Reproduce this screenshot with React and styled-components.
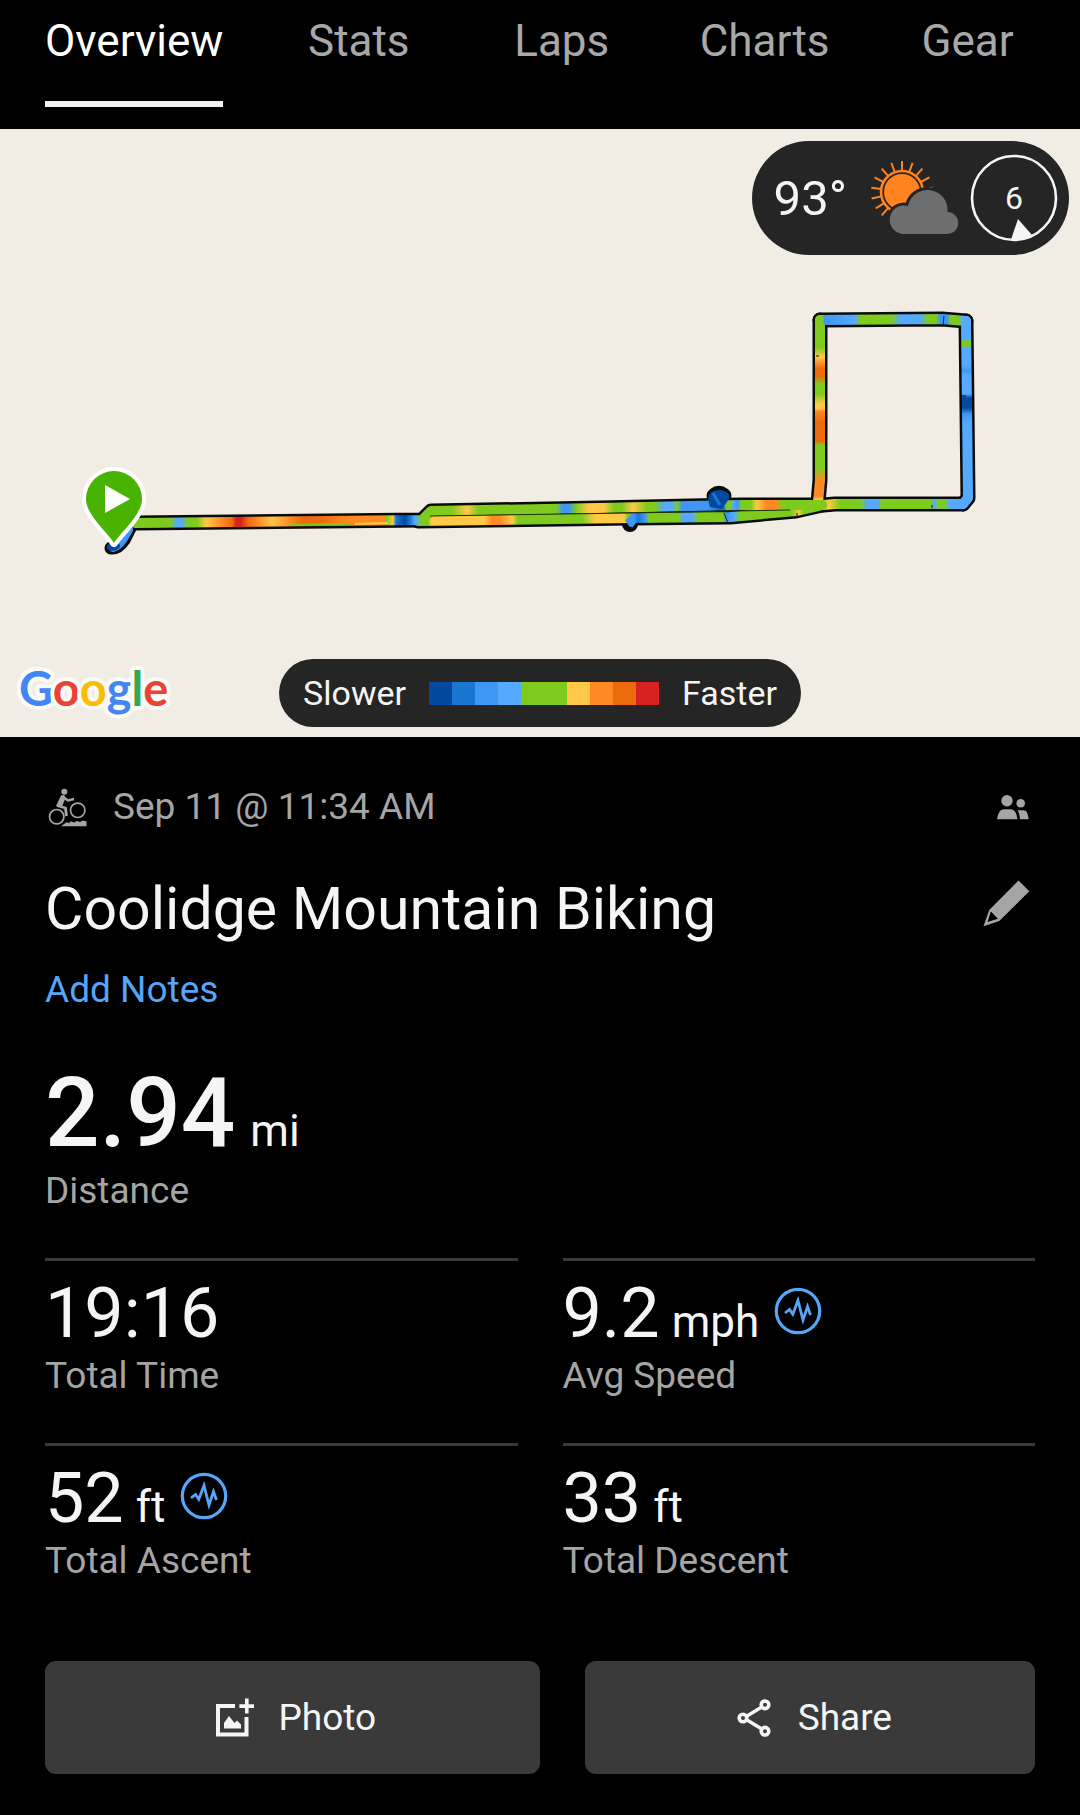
import React, { useState } from 'react'
import styled, { createGlobalStyle, css } from 'styled-components'

const GlobalStyle = createGlobalStyle`
  * {
    box-sizing: border-box;
  }

  body {
    margin: 0;
    background: #000000;
    color: #f5f5f5;
    font-family: Roboto, sans-serif;
    font-size: 37px;
    line-height: 48px;
  }

  button {
    border: 0;
    padding: 0;
    background: none;
    color: inherit;
    font: inherit;
    cursor: pointer;
  }

  svg {
    display: block;
    flex: none;
  }
`

/* ---------- tabs ---------- */

const Tabs = styled.nav`
  display: flex;
  padding: 17px 11px 22px;
`

const Tab = styled.button`
  flex: ${({ $wide }) => ($wide ? 'none' : '1')};
  display: flex;
  justify-content: center;
  padding: 0 34px;
  font-size: 44px;
  color: ${({ $active }) => ($active ? '#ffffff' : '#a8a8a8')};
`

const TabLabel = styled.span`
  padding-bottom: 36px;
  border-bottom: 6px solid ${({ $active }) => ($active ? '#f2f2f2' : 'transparent')};
`

/* ---------- map ---------- */

const Map = styled.section`
  position: relative;
  display: flex;
  flex-direction: column;
  justify-content: space-between;
  aspect-ratio: 1080 / 608;
  padding: 12px 11px 10px;
  background: #f1ede5;
`

const RouteLayer = styled.svg`
  position: absolute;
  inset: 0;
  width: 100%;
  height: 100%;
`

const pill = css`
  position: relative;
  display: flex;
  align-items: center;
  border-radius: 57px;
  background: #252525;
`

const Weather = styled.div`
  ${pill}
  align-self: flex-end;
  height: 114px;
  padding: 0 11px 0 22px;
`

const Temperature = styled.span`
  margin-right: 19px;
  padding-top: 2px;
  font-size: 49px;
`

const WindDial = styled.div`
  position: relative;
  display: grid;
  place-items: center;
  width: 88px;
  height: 88px;
  margin-left: 8px;
  font-size: 32px;
`

const DialRing = styled.svg`
  position: absolute;
  inset: 0;
`

const MapFooter = styled.div`
  position: relative;
  display: grid;
  grid-template-columns: 1fr auto 1fr;
  align-items: center;
`

const Logo = styled.svg`
  width: 170px;
  height: 68px;
`

const Legend = styled.div`
  ${pill}
  gap: 23px;
  height: 68px;
  padding: 0 24px;
  font-size: 34px;
`

const Scale = styled.div`
  display: flex;
`

const Swatch = styled.span`
  width: 23px;
  height: 23px;
  background: ${({ $color }) => $color};
`

/* ---------- summary ---------- */

const Summary = styled.main`
  padding: 46px 45px 41px;
`

const MetaRow = styled.div`
  display: flex;
  align-items: center;
  justify-content: space-between;
  padding-right: 6px;
  color: #a5a5a5;
`

const When = styled.div`
  display: flex;
  align-items: center;
  gap: 26px;
  padding-left: 3px;
`

const TitleRow = styled.div`
  display: flex;
  align-items: center;
  justify-content: space-between;
  margin-top: 42px;
  padding-right: 5px;
`

const Title = styled.h1`
  margin: 0;
  font-size: 59px;
  font-weight: 400;
  line-height: 72px;
`

const EditButton = styled.button`
  padding-bottom: 12px;
`

const NotesLink = styled.a`
  display: block;
  width: fit-content;
  margin-top: 21px;
  color: #55a5f8;
  text-decoration: none;
`

const Stats = styled.dl`
  display: grid;
  grid-template-columns: 1fr 1fr;
  gap: 43px 45px;
  margin: 45px 0 0;
`

const Stat = styled.div`
  display: flex;
  flex-direction: column-reverse;
  ${({ $hero }) =>
    $hero
      ? css`
          grid-column: 1 / -1;
        `
      : css`
          padding-top: 13px;
          border-top: 3px solid #3a3a3a;
        `}
`

const StatLabel = styled.dt`
  color: #a5a5a5;
`

const StatValue = styled.dd`
  display: flex;
  align-items: center;
  gap: 15px;
  margin: 0;
  font-size: ${({ $hero }) => ($hero ? '96px' : '70px')};
  font-weight: ${({ $hero }) => ($hero ? 500 : 400)};
  line-height: ${({ $hero }) => ($hero ? '108px' : '78px')};
`

const Unit = styled.span`
  margin-left: ${({ $hero }) => ($hero ? '15px' : '12px')};
  font-size: 44px;
  font-weight: 400;
  line-height: 1;
`

const PulseIcon = styled.svg`
  width: 48px;
  height: 48px;
  margin-bottom: 5px;
`

const Actions = styled.div`
  display: flex;
  gap: 45px;
  margin-top: 76px;
`

const ActionButton = styled.button`
  flex: ${({ $grow }) => $grow} 1 0;
  display: flex;
  align-items: center;
  justify-content: center;
  gap: 24px;
  height: 113px;
  padding-left: 6px;
  border-radius: 11px;
  background: #3a3a3a;
`

/* ---------- data ---------- */

const C = {
  navy: '#0449a0',
  blue: '#1976d2',
  azure: '#3f97f5',
  sky: '#55a9ff',
  green: '#7fcb1d',
  yellow: '#ffc947',
  orange: '#ff8a25',
  rust: '#ed6a0c',
  red: '#d82222',
}

const legendColors = [
  C.navy, C.blue, C.azure, C.sky, C.green, C.green, C.yellow, C.orange, C.rust, C.red,
]

// stops are [position along the axis, colour name]
const segments = [
  {
    id: 'loop-right',
    axis: 'y',
    d: 'M966 321 L968 498 L963 504',
    stops: [
      [326, 'sky'], [339, 'sky'], [341, 'green'], [345, 'green'], [349, 'sky'], [365, 'sky'],
      [371, 'azure'], [375, 'sky'], [394, 'sky'], [398, 'navy'], [408, 'navy'], [414, 'azure'],
      [424, 'sky'],
    ],
  },
  {
    id: 'loop-left',
    axis: 'y',
    d: 'M820 320 L820 480 L818 503',
    stops: [
      [320, 'green'], [348, 'green'], [357, 'yellow'], [364, 'orange'], [369, 'rust'],
      [376, 'rust'], [384, 'green'], [394, 'green'], [404, 'yellow'], [409, 'yellow'],
      [411, 'orange'], [422, 'rust'], [441, 'rust'], [445, 'green'], [468, 'green'],
      [481, 'orange'], [496, 'orange'], [500, 'yellow'],
    ],
  },
  {
    id: 'loop-top',
    axis: 'x',
    d: 'M820 320 L942 319 L966 321',
    stops: [
      [820, 'green'], [823, 'green'], [824, 'azure'], [855, 'sky'], [860, 'green'],
      [892, 'green'], [900, 'sky'], [920, 'sky'], [928, 'green'], [936, 'green'],
      [940, 'azure'], [948, 'azure'], [950, 'green'], [958, 'green'], [963, 'sky'],
    ],
  },
  {
    id: 'loop-bottom',
    axis: 'x',
    d: 'M812 506 L835 504 L963 504',
    stops: [
      [820, 'green'], [829, 'yellow'], [840, 'green'], [860, 'green'], [868, 'sky'], [878, 'sky'],
      [881, 'green'], [931, 'green'], [934, 'sky'], [939, 'green'], [945, 'green'], [949, 'sky'],
    ],
  },
  {
    id: 'leg-lower',
    axis: 'x',
    d: 'M418 521 L630 518 L730 517 L796 511 L818 506',
    stops: [
      [428, 'green'], [431, 'yellow'], [484, 'yellow'], [492, 'orange'], [500, 'orange'],
      [512, 'yellow'], [518, 'green'], [582, 'green'], [595, 'yellow'], [624, 'yellow'],
      [628, 'green'], [634, 'azure'], [638, 'blue'], [645, 'azure'], [649, 'green'],
      [679, 'green'], [682, 'sky'], [692, 'sky'], [698, 'green'], [723, 'green'], [727, 'azure'],
      [734, 'sky'], [740, 'green'], [792, 'green'], [799, 'yellow'], [803, 'green'],
    ],
  },
  {
    id: 'leg-upper',
    axis: 'x',
    d: 'M135 523 L422 520 L431 511 L600 508 L690 506 L740 505 L822 505',
    stops: [
      [170, 'green'], [177, 'sky'], [181, 'sky'], [188, 'green'], [197, 'green'], [206, 'yellow'],
      [222, 'orange'], [232, 'rust'], [236, 'red'], [241, 'red'], [248, 'rust'], [258, 'orange'],
      [272, 'yellow'], [290, 'orange'], [302, 'rust'], [320, 'rust'], [350, 'orange'],
      [384, 'orange'], [387, 'green'], [393, 'yellow'], [396, 'blue'], [405, 'navy'],
      [410, 'blue'], [415, 'sky'], [422, 'green'], [452, 'green'], [467, 'yellow'],
      [478, 'green'], [556, 'green'], [563, 'azure'], [569, 'azure'], [576, 'green'],
      [588, 'yellow'], [604, 'yellow'], [614, 'green'], [622, 'green'], [633, 'yellow'],
      [647, 'green'], [655, 'green'], [664, 'sky'], [672, 'sky'], [677, 'green'],
      [682, 'azure'], [708, 'azure'], [718, 'blue'], [724, 'blue'], [727, 'green'],
      [733, 'sky'], [738, 'azure'], [741, 'green'], [751, 'green'], [757, 'yellow'],
      [766, 'orange'], [776, 'orange'], [782, 'green'],
    ],
  },
]

const stats = [
  { label: 'Distance', value: '2.94', unit: 'mi', hero: true },
  { label: 'Total Time', value: '19:16' },
  { label: 'Avg Speed', value: '9.2', unit: 'mph', chart: true },
  { label: 'Total Ascent', value: '52', unit: 'ft', chart: true },
  { label: 'Total Descent', value: '33', unit: 'ft' },
]

/* ---------- drawings ---------- */

const SegmentGradient = ({ id, axis, stops }) => {
  const from = stops[0][0]
  const to = stops[stops.length - 1][0]
  const ends = axis === 'x' ? { x1: from, x2: to, y1: 0, y2: 0 } : { x1: 0, x2: 0, y1: from, y2: to }
  return (
    <linearGradient id={id} gradientUnits='userSpaceOnUse' {...ends}>
      {stops.map(([at, name]) => (
        <stop key={at} offset={(at - from) / (to - from)} stopColor={C[name]} />
      ))}
    </linearGradient>
  )
}

const Route = () => (
  <RouteLayer viewBox='0 129 1080 608' preserveAspectRatio='xMidYMid slice' aria-hidden='true'>
    <defs>
      {segments.map(s => <SegmentGradient key={s.id} {...s} />)}
    </defs>
    <g fill='none' stroke='#0a0c0c' strokeWidth='15' strokeLinecap='round' strokeLinejoin='round'>
      <path d='M130 528 L124 540 Q118 549 111 548' strokeWidth='13' />
      {segments.map(s => <path key={s.id} d={s.d} />)}
      <path d='M715 496 Q719 493 723 496' strokeWidth='17' />
      <path d='M630 522 v2' strokeWidth='16' />
    </g>
    <g fill='none' strokeWidth='10' strokeLinecap='round' strokeLinejoin='round'>
      <path d='M129 530 L123 540 Q119 546 113 548' stroke={C.azure} strokeWidth='8' />
      <path d='M117 546 Q114 549 110 547' stroke={C.navy} strokeWidth='6' />
      {segments.map(s => <path key={s.id} d={s.d} stroke={`url(#${s.id})`} />)}
    </g>
    <path d='M430 516 L630 513 L734 511 L790 510' fill='none' stroke='#1c3208' strokeWidth='1' />
    <path d='M355 524 L388 523' stroke={C.yellow} strokeWidth='2' />
    <path d='M290 525 L350 524' stroke={C.green} strokeWidth='2' />
    <path d='M709 503 Q706 491 719 490 Q731 491 729 499 L722 509 L710 507 Z' fill={C.navy} />
    <path d='M713 493 L720 505' stroke={C.blue} strokeWidth='3' />
    <path d='M724 506 L733 500 L731 509 Z' fill={C.green} />
    <path d='M625 520 L633 514 L636 523 L631 529 Z' fill={C.azure} />
    <path d='M627 526 l4 5 l1 -4 z' fill='#0a0c0c' />
    <path d='M724 513 l4 10 M944 316 l-1 9 M486 525 v2 M689 522 v2' stroke='#0a1c30' strokeWidth='1' />
    <path d='M816 356 h3 M962 396 h4 M932 505 v3 M797 513 v4' stroke='#111111' strokeWidth='1' />
    <path
      d='M114 543 C108 533 86 515 86 499 A28 28 0 0 1 142 499 C142 515 120 533 114 543 Z'
      fill='#48b300'
      stroke='#ffffff'
      strokeWidth='8'
      strokeLinejoin='round'
      paintOrder='stroke'
    />
    <path d='M105 485 L130 499 L105 513 Z' fill='#ffffff' />
  </RouteLayer>
)

const rays = [-139, -122, -102, -82, -62, -41, -20, 0, 20, 41, 62, 82]

const PartlyCloudy = () => (
  <svg width='96' height='80' viewBox='867 159 96 80' aria-label='Partly cloudy'>
    <g stroke='#ff8420' fill='none' strokeWidth='2'>
      {rays.map(a => (
        <path key={a} d='M903 172 V162' transform={`rotate(${a} 903 193)`} />
      ))}
      <circle cx='903' cy='193' r='21' strokeWidth='2.6' />
    </g>
    <circle cx='903' cy='193' r='18' fill='#ff8420' />
    <path
      d='M904 235 A14.3 14.3 0 1 1 909 207 A20 20 0 0 1 948.5 213 A11 11 0 1 1 948 235 Z'
      fill='#6e6e6e'
      stroke='#252525'
      strokeWidth='6'
      paintOrder='stroke'
    />
  </svg>
)

const MountainBiker = () => (
  <svg width='39' height='39' viewBox='0 0 39 39' aria-hidden='true'>
    <circle cx='16.3' cy='3.7' r='3' fill='currentColor' />
    <g fill='none' stroke='currentColor' strokeWidth='1.7'>
      <circle cx='8.7' cy='28.7' r='7.2' />
      <circle cx='29.7' cy='22.3' r='7.2' />
      <path d='M15 9 L20 12.5 L26 11' strokeWidth='2.4' />
      <path d='M9 17.5 L17.5 20 L18.5 28' strokeWidth='2.8' strokeLinejoin='round' />
    </g>
    <path d='M13 7.5 Q17 6 17.5 10 L14 18.5 L8 18 Z' fill='currentColor' />
    <path
      d='M13 38.3 L18.5 34.2 L21 35 L23 33.3 L26 34.5 L29 33 L32 34 L35 32.6 L38.5 33.6 V38.3 Z'
      fill='currentColor'
    />
  </svg>
)

const People = () => (
  <svg width='32' height='25' viewBox='0 0 32 25' fill='currentColor' aria-hidden='true'>
    <circle cx='10' cy='5.7' r='5.7' />
    <circle cx='23.7' cy='8.2' r='4.3' />
    <path d='M0 24.3 C1 17 4 14.3 7 14.3 H13.5 C17 14.3 19.6 17 20.3 24.3 Z' />
    <path d='M20.5 15.3 H26.5 C29.5 15.3 31 18 31.7 24.3 H23 C22.8 20.5 22 17.5 20.5 15.3 Z' />
  </svg>
)

const Pencil = () => (
  <svg width='47' height='47' viewBox='0 0 47 47' fill='#a5a5a5' aria-hidden='true'>
    <path
      fillRule='evenodd'
      d='M35.5 0.5 L46.3 11.2 L16.3 41 L0.5 46.3 L6.2 30 Z M7.8 31.5 L4.5 42 L15 38.8 Z'
    />
  </svg>
)

const Pulse = () => (
  <PulseIcon viewBox='0 0 48 48' fill='none' stroke='#55a5f8' aria-hidden='true'>
    <circle cx='24' cy='24' r='21.7' strokeWidth='3.2' />
    <path d='M11 26 L15.5 22.5 L18.8 27.3 L24 13.5 L29 33 L33.5 19.5 L36.5 28' strokeWidth='2.8' />
  </PulseIcon>
)

const AddPhoto = () => (
  <svg width='40' height='40' viewBox='0 0 40 40' fill='currentColor' aria-hidden='true'>
    <path d='M1 6 H20 V10 H5 V34.5 H29.5 V19 H33.5 V38.5 H1 Z' />
    <path d='M30 0.5 h3.6 v5.8 h5.4 v3.6 h-5.4 v5.6 h-3.6 v-5.6 h-5.6 v-3.6 h5.6 Z' />
    <path d='M9 30.5 V25 L14 18 L19.5 25 L22 22.5 L26 26.5 V30.5 Z' />
  </svg>
)

const ShareNodes = () => (
  <svg width='40' height='40' viewBox='0 0 40 40' fill='none' stroke='currentColor' aria-hidden='true'>
    <path d='M13 18 L27 9.5 M13 22 L27 30.5' strokeWidth='3.4' />
    <g strokeWidth='3.6'>
      <circle cx='31' cy='6.8' r='3.8' />
      <circle cx='9' cy='20' r='3.8' />
      <circle cx='31' cy='33.2' r='3.8' />
    </g>
  </svg>
)

const GoogleLogo = () => (
  <Logo viewBox='0 0 170 68'>
    <text
      x='8'
      y='47'
      fontFamily='Lato, sans-serif'
      fontSize='47'
      fontWeight='700'
      stroke='#fbfaf7'
      strokeWidth='8'
      strokeLinejoin='round'
      paintOrder='stroke'
    >
      <tspan fill='#4285f4'>G</tspan>
      <tspan fill='#ea4335'>o</tspan>
      <tspan fill='#fbbc05'>o</tspan>
      <tspan fill='#4285f4'>g</tspan>
      <tspan fill='#34a853'>l</tspan>
      <tspan fill='#ea4335'>e</tspan>
    </text>
  </Logo>
)

/* ---------- page ---------- */

const tabs = ['Overview', 'Stats', 'Laps', 'Charts', 'Gear']

const App = () => {
  const [active, setActive] = useState('Overview')

  return (
    <>
      <GlobalStyle />
      <Tabs>
        {tabs.map((tab, i) => (
          <Tab key={tab} type='button' $wide={i === 0} $active={tab === active} onClick={() => setActive(tab)}>
            <TabLabel $active={tab === active}>{tab}</TabLabel>
          </Tab>
        ))}
      </Tabs>
      <Map>
        <Route />
        <Weather>
          <Temperature>93°</Temperature>
          <PartlyCloudy />
          <WindDial>
            <DialRing viewBox='0 0 88 88' aria-hidden='true'>
              <circle cx='44' cy='44' r='42' fill='none' stroke='#f5f5f5' strokeWidth='2.6' />
              <path d='M48 65 L41 85.5 L51 85.5 L62 81 Z' fill='#f5f5f5' />
            </DialRing>
            <span>6</span>
          </WindDial>
        </Weather>
        <MapFooter>
          <GoogleLogo />
          <Legend>
            <span>Slower</span>
            <Scale>
              {legendColors.map((color, i) => <Swatch key={i} $color={color} />)}
            </Scale>
            <span>Faster</span>
          </Legend>
        </MapFooter>
      </Map>
      <Summary>
        <MetaRow>
          <When>
            <MountainBiker />
            <span>Sep 11 @ 11:34 AM</span>
          </When>
          <People />
        </MetaRow>
        <TitleRow>
          <Title>Coolidge Mountain Biking</Title>
          <EditButton type='button' aria-label='Edit title'>
            <Pencil />
          </EditButton>
        </TitleRow>
        <NotesLink href='#notes'>Add Notes</NotesLink>
        <Stats>
          {stats.map(({ label, value, unit, hero, chart }) => (
            <Stat key={label} $hero={hero}>
              <StatLabel>{label}</StatLabel>
              <StatValue $hero={hero}>
                <span>
                  {value}
                  {unit && <Unit $hero={hero}>{unit}</Unit>}
                </span>
                {chart && <Pulse />}
              </StatValue>
            </Stat>
          ))}
        </Stats>
        <Actions>
          <ActionButton type='button' $grow={11}>
            <AddPhoto />
            Photo
          </ActionButton>
          <ActionButton type='button' $grow={10}>
            <ShareNodes />
            Share
          </ActionButton>
        </Actions>
      </Summary>
    </>
  )
}

export default App
